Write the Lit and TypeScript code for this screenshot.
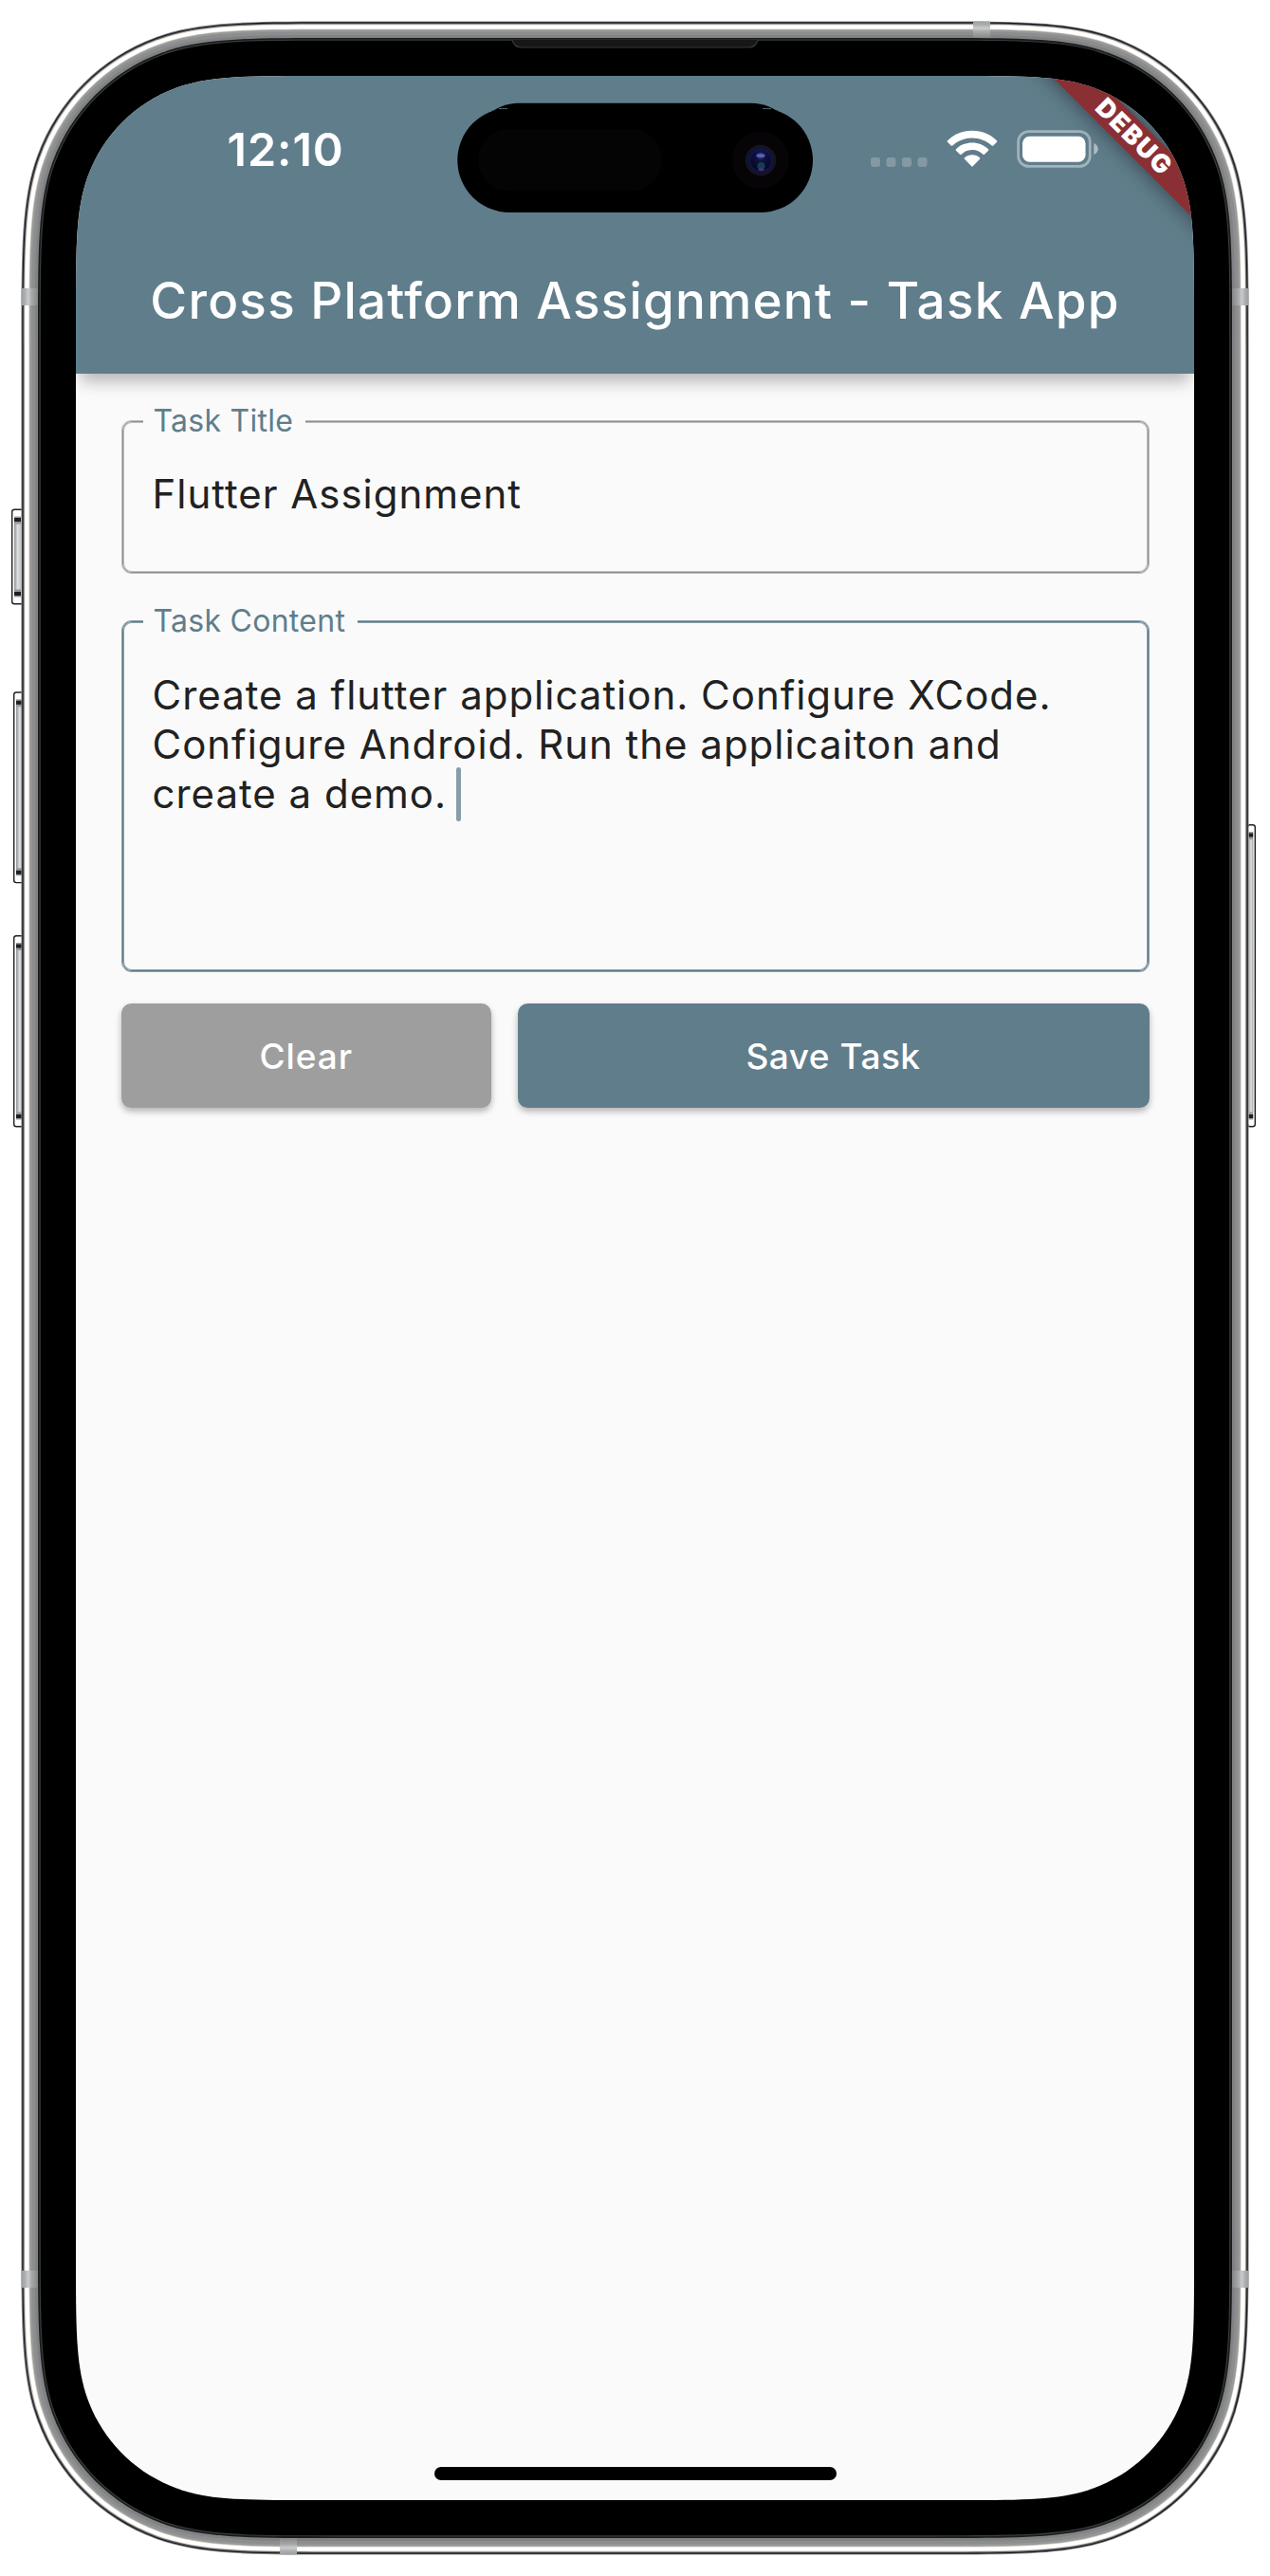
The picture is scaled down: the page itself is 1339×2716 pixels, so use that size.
import { LitElement, html, svg, css, unsafeCSS } from "lit";
import { customElement, property } from "lit/decorators.js";

/** Rounded rectangle with continuous (smooth) corners. */
function squircle(x: number, y: number, w: number, h: number, r: number): string {
  const profile: number[][] = [
    [1.08849, 0], [0.86841, 0], [0.66993, 0.0616],
    [0.66993, 0.0616], [0.63149, 0.07491], [0.63149, 0.07491],
    [0.37282, 0.16906], [0.16906, 0.37282], [0.07491, 0.63149],
    [0.07491, 0.63149], [0.0616, 0.66993], [0.0616, 0.66993],
    [0, 0.86841], [0, 1.08849], [0, 1.52866],
  ];
  const corner = (map: (a: number, b: number) => [number, number]) => {
    let d = "";
    for (let i = 0; i < profile.length; i += 3) {
      d += "C" + profile.slice(i, i + 3)
        .map(([a, b]) => map(a * r, b * r).map((n) => n.toFixed(2)).join(" "))
        .join(" ");
    }
    return d;
  };
  const reversed = (map: (a: number, b: number) => [number, number]) => corner(map);
  const e = 1.52866 * r;
  const X = x + w;
  const Y = y + h;
  return (
    `M${x + e} ${y}L${X - e} ${y}` + corner((a, b) => [X - a, y + b]) +
    `L${X} ${Y - e}` + reversed((a, b) => [X - b, Y - a]) +
    `L${x + e} ${Y}` + corner((a, b) => [x + a, Y - b]) +
    `L${x} ${y + e}` + reversed((a, b) => [x + b, y + a]) + "Z"
  );
}

const SCREEN_CLIP = squircle(0, 0, 1179, 2556, 168);

@customElement("phone-frame")
class PhoneFrame extends LitElement {
  static styles = css`
    :host { display: block; }
    svg { display: block; }
  `;

  /** [inset from the screen edge, colour], from outside to inside. */
  private rings: [number, string][] = [
    [57.6, "#85878a"], [56.7, "#17191b"], [55.6, "#606264"], [54.5, "#dcdad2"],
    [53.6, "#ffffff"], [49.6, "#d6cfc0"], [48.8, "#98999b"], [46.5, "#8b8d8f"],
    [43, "#808284"], [40, "#191b1b"], [38.4, "#3a3c3c"], [37.2, "#000000"],
  ];

  private button(x: number, y: number, h: number, side: "l" | "r") {
    const inner = side === "l" ? x + 3 : x + 2;
    return svg`
      <rect x=${x + 0.7} y=${y + 0.7} width=${side === "l" ? 12 : 8} height=${h - 1.4} rx="2.5" fill="#fff" stroke="#1d1f21" stroke-width="1.4"/>
      <rect x=${inner} y=${y + 8} width=${side === "l" ? 7 : 4.6} height=${h - 16} fill="url(#cap)"/>
      <rect x=${inner} y=${y + 16} width=${side === "l" ? 7 : 4.6} height=${h - 32} fill=${side === "l" ? "url(#keyL)" : "url(#keyR)"}/>
      <rect x=${inner} y=${y + 9.5} width=${side === "l" ? 7 : 4.6} height="4" fill="#1c1e20"/>
      <rect x=${inner} y=${y + h - 13.5} width=${side === "l" ? 7 : 4.6} height="4" fill="#1c1e20"/>`;
  }

  private band(x: number, y: number, w: number, h: number, id: string) {
    return svg`<rect x=${x} y=${y} width=${w} height=${h} fill=${`url(#${id})`}/>`;
  }

  render() {
    const stops = svg`<stop offset="0" stop-color="#9da0a2"/><stop offset=".2" stop-color="#aaacad"/><stop offset=".42" stop-color="#cbcccd"/><stop offset=".6" stop-color="#a9aaab"/><stop offset="1" stop-color="#858789"/>`;
    return html`
      <svg width="1339" height="2716" viewBox="0 0 1339 2716">
        <defs>
          <linearGradient id="cap" x1="0" y1="0" x2="0" y2="1">
            <stop offset="0" stop-color="#9b9d9f"/><stop offset=".5" stop-color="#707274"/><stop offset="1" stop-color="#9b9d9f"/>
          </linearGradient>
          <linearGradient id="keyL"><stop offset="0" stop-color="#8f9193"/><stop offset=".5" stop-color="#dcdddd"/><stop offset="1" stop-color="#c4c5c6"/></linearGradient>
          <linearGradient id="keyR"><stop offset="0" stop-color="#b4b5b6"/><stop offset=".6" stop-color="#dcdddd"/><stop offset="1" stop-color="#9b9d9f"/></linearGradient>
          <linearGradient id="bandL">${stops}</linearGradient>
          <linearGradient id="bandR" x1="1" x2="0">${stops}</linearGradient>
          <linearGradient id="bandT" x2="0" y2="1">${stops}</linearGradient>
          <linearGradient id="bandB" x1="0" y1="1" x2="0" y2="0">${stops}</linearGradient>
        </defs>
        ${this.button(12, 536.5, 101, "l")}
        ${this.button(14, 729.3, 202, "l")}
        ${this.button(14, 986, 202.5, "l")}
        ${this.button(1314.6, 869, 319.5, "r")}
        ${this.rings.map(([d, fill]) => svg`<path fill=${fill} d=${squircle(80 - d, 80 - d, 1179 + 2 * d, 2556 + 2 * d, 167 + d)}/>`)}
        ${this.band(1026, 22.5, 18, 17.5, "bandT")}
        ${this.band(295, 2676, 18, 17.5, "bandB")}
        ${this.band(22.5, 304, 17.5, 18, "bandL")}
        ${this.band(22.5, 2394, 17.5, 18, "bandL")}
        ${this.band(1299, 304, 17.5, 18, "bandR")}
        ${this.band(1299, 2394, 17.5, 18, "bandR")}
        <path d="M540 42 Q542 50 550 50 H789 Q797 50 799 42 Z" fill="#171717"/>
        <path d="M540 42 Q542 50 550 50 H789 Q797 50 799 42" fill="none" stroke="#363636" stroke-width="1.2"/>
      </svg>`;
  }
}

@customElement("dynamic-island")
class DynamicIsland extends LitElement {
  static styles = css`
    :host { display: block; }
    svg { display: block; }
  `;
  render() {
    return html`
      <svg width="377" height="118" viewBox="481 107 377 118">
        <defs>
          <radialGradient id="lens" cx=".5" cy=".3" r=".7">
            <stop offset="0" stop-color="#3c4490"/><stop offset=".3" stop-color="#101240"/><stop offset="1" stop-color="#05051c"/>
          </radialGradient>
        </defs>
        <rect x="498" y="108.7" width="343" height="98" rx="49"/>
        <rect x="482.3" y="114" width="374.7" height="110" rx="55"/>
        <path d="M526 114.6h9M804 114.6h9" stroke="#55656d" stroke-width="1"/>
        <rect x="504" y="136" width="194" height="65.5" rx="32.7" fill="#040404"/>
        <circle cx="802" cy="169" r="30" fill="#070407"/>
        <circle cx="802" cy="169" r="16.3" fill="#131424"/>
        <circle cx="802" cy="169" r="11.5" fill="url(#lens)" stroke="#10155c" stroke-width="1.4"/>
        <ellipse cx="802" cy="164" rx="4.6" ry="2" fill="#5560b4"/>
        <circle cx="802.5" cy="175.3" r="4.2" fill="#123f52"/>
        <ellipse cx="802.5" cy="178.8" rx="3" ry="1.3" fill="#6a2290"/>
      </svg>`;
  }
}

@customElement("status-bar")
class StatusBar extends LitElement {
  static styles = css`
    :host {
      display: flex; align-items: center; justify-content: space-between;
      box-sizing: border-box; height: 156px; padding: 0 101px 0 159.5px; color: #fff;
    }
    .time { font-size: 48.5px; font-weight: 600; letter-spacing: 0.9px; line-height: 60px; }
    .icons { display: flex; gap: 20px; }
    svg { display: block; }
  `;
  render() {
    return html`
      <span class="time">12:10</span>
      <span class="icons">
        <svg width="60" height="44" viewBox="0 0 60 44" fill="#fff" fill-opacity=".22">
          ${[0, 16.5, 33, 49.5].map((x) => svg`<rect x=${x} y="30" width="10" height="10" rx="3"/>`)}
        </svg>
        <svg width="54" height="44" viewBox="998 136 54 44" fill="#fff">
          <path d="M1025 137.7C1035.2 137.7 1044.4 141.7 1051 148.2Q1051.7 149 1051 149.8L1047.3 153.5Q1046.5 154.2 1045.7 153.5C1040.3 148.4 1033 145.4 1025 145.4C1017 145.4 1009.7 148.4 1004.3 153.5Q1003.5 154.2 1002.7 153.5L999 149.8Q998.3 149 999 148.2C1005.6 141.7 1014.8 137.7 1025 137.7Z"/>
          <path d="M1025 150.4C1031.7 150.4 1037.6 152.9 1042 157.2Q1042.7 158 1042 158.8L1038 162.7Q1037.2 163.4 1036.4 162.7C1033.5 160 1029.5 158.1 1025 158.1C1020.5 158.1 1016.5 160 1013.6 162.7Q1012.8 163.4 1012 162.7L1008 158.8Q1007.3 158 1008 157.2C1012.4 152.9 1018.3 150.4 1025 150.4Z"/>
          <path d="M1025 163.2C1028.2 163.2 1031 164.4 1033 166.3Q1033.7 167 1033 167.8L1025.7 175.3Q1025 176 1024.3 175.3L1017 167.8Q1016.3 167 1017 166.3C1019 164.4 1021.8 163.2 1025 163.2Z"/>
        </svg>
        <svg width="86" height="44" viewBox="0 0 86 44" fill="none">
          <rect x="1.6" y="2.6" width="75.6" height="36.8" rx="11" stroke="#fff" stroke-opacity=".42" stroke-width="2.7"/>
          <rect x="6" y="7.8" width="66.5" height="27" rx="7.5" fill="#fff"/>
          <path d="M81.3 15C84 16.2 85.8 18.5 85.8 21C85.8 23.5 84 25.8 81.3 27Z" fill="#fff" fill-opacity=".5"/>
        </svg>
      </span>`;
  }
}

@customElement("task-field")
class TaskField extends LitElement {
  @property() label = "";
  @property({ type: Boolean, reflect: true }) focused = false;

  static styles = css`
    :host {
      display: block; box-sizing: border-box; position: relative; height: 160px;
      padding: 50px 30.5px; border: 1px solid #909090; border-radius: 10px;
      box-shadow: 0 0 0 1px rgba(145, 145, 145, 0.6), inset 0 0 0 1px rgba(145, 145, 145, 0.6);
      font-size: 42px; line-height: 52px; letter-spacing: 0.98px; color: #212121; white-space: nowrap;
    }
    :host([focused]) {
      height: 369px; padding-top: 51px; border-color: #5b7987;
      box-shadow: 0 0 0 1px rgba(91, 121, 135, 0.7), inset 0 0 0 1px rgba(91, 121, 135, 0.7);
    }
    .label {
      position: absolute; left: 21px; top: -17px; padding: 0 13px 0 10.5px; background: #fafafa;
      font-size: 32px; line-height: 32px; letter-spacing: 0.27px; color: #607d8b;
    }
  `;
  render() {
    return html`<span class="label">${this.label}</span><slot></slot>`;
  }
}

@customElement("app-root")
class AppRoot extends LitElement {
  static styles = css`
    :host { display: block; background: #fff; font-family: Inter, "Liberation Sans", sans-serif; }
    .device { position: relative; box-sizing: border-box; width: 1339px; height: 2716px; padding: 80px; overflow: hidden; }
    .frame { position: absolute; inset: 0; }
    .screen {
      position: relative; display: flex; flex-direction: column; height: 2556px; background: #fafafa;
      clip-path: path("${unsafeCSS(SCREEN_CLIP)}");
    }
    .top { background: #607d8b; height: 314px; box-shadow: 0 13px 16px -5px rgba(0, 0, 0, 0.28); }
    .title {
      display: flex; justify-content: center; align-items: center; height: 157px; padding-top: 2px;
      font-size: 53px; font-weight: 500; letter-spacing: 1.22px; color: #fff; white-space: nowrap;
    }
    .form { display: flex; flex-direction: column; padding: 50px 47.5px 0; }
    task-field { margin: 0 1px 0 1.5px; }
    task-field + task-field { margin-top: 51px; }
    .caret {
      display: inline-block; width: 5.5px; height: 57.5px; margin: -10px 0 -10px -3px;
      vertical-align: -4px; border-radius: 3px; background: #879eaa;
    }
    .actions { display: flex; gap: 27.5px; margin-top: 34px; }
    .btn {
      height: 110px; border: 0; border-radius: 10.5px; padding: 0; color: #fff; background: #607d8b; flex: 666 1 0;
      font: 500 37px Inter, "Liberation Sans", sans-serif; letter-spacing: 0.5px;
      box-shadow: 0 4px 6px rgba(0, 0, 0, 0.22), 0 3px 10px rgba(0, 0, 0, 0.08);
    }
    .clear { background: #9e9e9e; flex-grow: 390.5; letter-spacing: 0.9px; }
    .home { width: 424px; height: 14px; border-radius: 7px; background: #000; margin: auto auto 21px; }
    .island { position: absolute; left: 401px; top: 27px; }
    .debug {
      position: absolute; left: 964.7px; top: 48.3px; width: 300px; height: 32px; transform: rotate(45deg);
      background: #8a2f34; color: #fff; text-align: center; font-size: 27px; font-weight: 900; line-height: 32px;
      letter-spacing: 1.6px; text-indent: 1.6px; box-shadow: 0 0 22px rgba(0, 0, 0, 0.5);
    }
  `;
  render() {
    return html`
      <div class="device">
        <phone-frame class="frame"></phone-frame>
        <div class="screen">
          <div class="top">
            <status-bar></status-bar>
            <div class="title">Cross Platform Assignment - Task App</div>
          </div>
          <div class="form">
            <task-field label="Task Title">Flutter Assignment</task-field>
            <task-field label="Task Content" focused
              >Create a flutter application. Configure XCode.<br />Configure Android. Run the applicaiton and<br />create a demo. <span class="caret"></span
            ></task-field>
            <div class="actions">
              <button class="btn clear">Clear</button>
              <button class="btn">Save Task</button>
            </div>
          </div>
          <div class="home"></div>
          <dynamic-island class="island"></dynamic-island>
          <div class="debug">DEBUG</div>
        </div>
      </div>`;
  }
}
